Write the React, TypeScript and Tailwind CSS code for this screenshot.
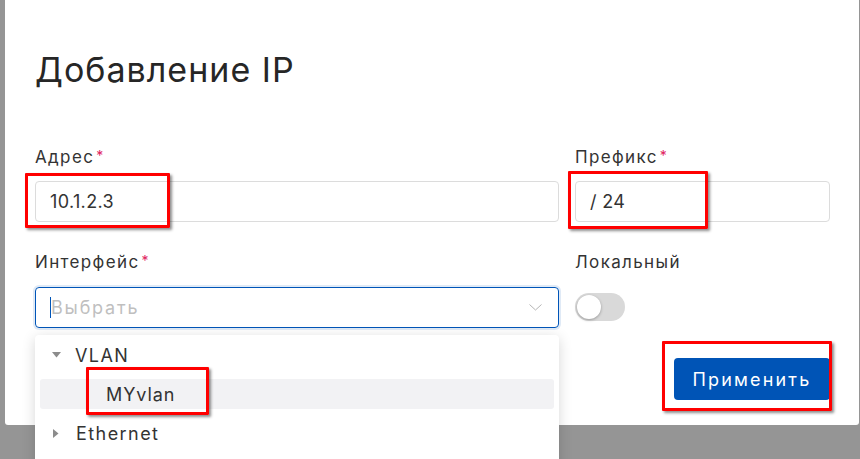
import React from "react";

const font = { fontFamily: "Inter, 'Noto Sans', sans-serif" };

const Label: React.FC<{ text: string; required?: boolean }> = ({ text, required }) => (
  <div className="h-[20px] flex items-center text-[17px] text-[#333333] tracking-[0.08em]">
    {text}
    {required && <span className="ml-[2px] text-[#e0245e] text-[14px] -mt-[6px]">*</span>}
  </div>
);

const RedBox: React.FC<{ className: string }> = ({ className }) => (
  <div
    className={
      "absolute border-[3px] border-[#ff0000] rounded-[1px] shadow-[2px_2px_3px_rgba(0,0,0,0.45)] pointer-events-none " +
      className
    }
  />
);

const App: React.FC = () => {
  return (
    <div className="relative w-[860px] h-[459px] overflow-hidden bg-[#959595]" style={font}>
      <div className="ml-[5px] w-[854px] h-[425px] bg-white rounded-b-[3px] pl-[30px] pr-[25px] pt-[49px]">
        <h1 className="h-[41px] leading-[41px] text-[34px] text-[#262626] font-normal tracking-[0.03em]">
          Добавление IP
        </h1>

        <div className="grid grid-cols-[524px_255px] gap-x-[16px] mt-[58px]">
          <div>
            <Label text="Адрес" required />
            <div className="mt-[13px] h-[41px] border border-[#dcdcdc] rounded-[4px] flex items-center pl-[14px] text-[18px] text-[#333333] tracking-[0.02em]">
              10.1.2.3
            </div>
          </div>
          <div>
            <Label text="Префикс" required />
            <div className="mt-[13px] h-[41px] border border-[#dcdcdc] rounded-[4px] flex items-center pl-[14px] text-[18px] text-[#333333] tracking-[0.02em]">
              / 24
            </div>
          </div>

          <div className="mt-[31px]">
            <Label text="Интерфейс" required />
            <div className="relative mt-[14px]">
              <div className="h-[41px] border border-[#0055b8] rounded-[4px] shadow-[0_0_0_2px_rgba(0,85,184,0.12)] flex items-center pl-[14px] pr-[14px]">
                <span className="w-px h-[21px] bg-[#0055b8]" />
                <span className="flex-1 text-[18px] text-[#bfbfbf] tracking-[0.1em]">Выбрать</span>
                <svg width="13" height="7" viewBox="0 0 13 7" className="mr-[2px]">
                  <path d="M0.5 0.5 L6.5 6 L12.5 0.5" fill="none" stroke="#b5b5b5" strokeWidth="1" />
                </svg>
              </div>
              <div className="absolute left-0 right-0 top-[48px] h-[140px] bg-white rounded-[4px] shadow-[0_3px_14px_rgba(0,0,0,0.16)] pt-[5px] px-[5px] flex flex-col gap-[9px] text-[18px] text-[#333333] tracking-[0.08em]">
                <div className="h-[30px] flex items-center">
                  <svg width="9" height="6" viewBox="0 0 9 6" className="ml-[12px] mr-[14px]">
                    <path d="M0 0 L9 0 L4.5 5.5 Z" fill="#8c8c8c" />
                  </svg>
                  VLAN
                </div>
                <div className="h-[30px] flex items-center bg-[#f2f2f4] rounded-[3px] pl-[66px] tracking-[0.05em]">MYvlan</div>
                <div className="h-[30px] flex items-center">
                  <svg width="6" height="9" viewBox="0 0 6 9" className="ml-[13px] mr-[17px]">
                    <path d="M0 0 L5.5 4.5 L0 9 Z" fill="#8c8c8c" />
                  </svg>
                  Ethernet
                </div>
              </div>
            </div>
          </div>

          <div className="mt-[31px] flex flex-col">
            <Label text="Локальный" />
            <div className="mt-[20px] w-[50px] h-[28px] rounded-full bg-[#d9d9d9] p-[2px]">
              <div className="w-[24px] h-[24px] rounded-full bg-white shadow-[0_1px_3px_rgba(0,0,0,0.3)]" />
            </div>
            <div className="flex justify-end mt-[37px]">
              <button className="w-[156px] h-[42px] bg-[#0054b6] rounded-[4px] text-white text-[18px] tracking-[0.12em]">
                Применить
              </button>
            </div>
          </div>
        </div>
      </div>

      <RedBox className="left-[25px] top-[173px] w-[145px] h-[55px]" />
      <RedBox className="left-[568px] top-[171px] w-[140px] h-[58px]" />
      <RedBox className="left-[86px] top-[367px] w-[123px] h-[48px]" />
      <RedBox className="left-[662px] top-[341px] w-[170px] h-[70px]" />
    </div>
  );
};

export default App;
